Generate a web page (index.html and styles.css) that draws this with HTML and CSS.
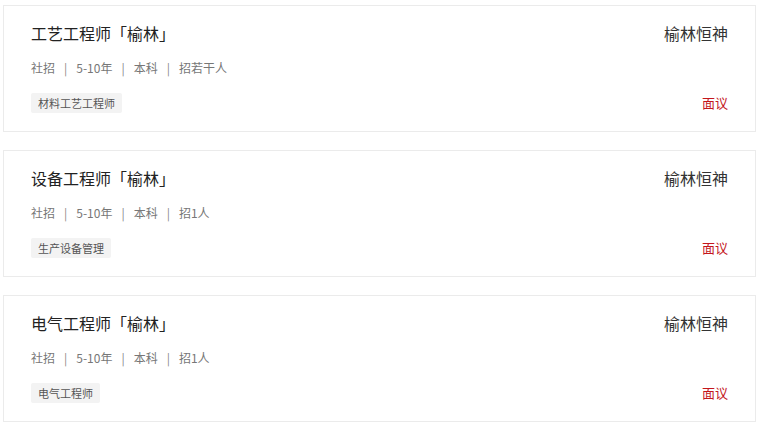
FILE: index.html
```html
<!DOCTYPE html>
<html lang="zh-CN">
	<head>
		<meta charset="UTF-8" />
		<meta name="viewport" content="width=device-width, initial-scale=1.0" />
		<title>职位列表</title>
		<link rel="stylesheet" href="styles.css">
	</head>
	<body>
		<div class="job-list">
			<div class="job-card">
				<div class="job-main">
					<div class="job-title">工艺工程师「榆林」</div>
					<div class="job-meta">社招<span class="sep">|</span>5-10年<span class="sep">|</span>本科<span class="sep">|</span>招若干人</div>
					<div class="job-tags"><span class="tag">材料工艺工程师</span></div>
				</div>
				<div class="job-side">
					<div class="company">榆林恒神</div>
					<div class="salary">面议</div>
				</div>
			</div>

			<div class="job-card">
				<div class="job-main">
					<div class="job-title">设备工程师「榆林」</div>
					<div class="job-meta">社招<span class="sep">|</span>5-10年<span class="sep">|</span>本科<span class="sep">|</span>招1人</div>
					<div class="job-tags"><span class="tag">生产设备管理</span></div>
				</div>
				<div class="job-side">
					<div class="company">榆林恒神</div>
					<div class="salary">面议</div>
				</div>
			</div>

			<div class="job-card">
				<div class="job-main">
					<div class="job-title">电气工程师「榆林」</div>
					<div class="job-meta">社招<span class="sep">|</span>5-10年<span class="sep">|</span>本科<span class="sep">|</span>招1人</div>
					<div class="job-tags"><span class="tag">电气工程师</span></div>
				</div>
				<div class="job-side">
					<div class="company">榆林恒神</div>
					<div class="salary">面议</div>
				</div>
			</div>
		</div>
	</body>
</html>
```

FILE: styles.css
```css
body {
	font-family: "Noto Sans CJK SC", "Noto Sans", sans-serif;
	background-color: #fff;
	margin: 5px 4px 0 3px;
	padding: 0;
}

.job-list {
	display: flex;
	flex-direction: column;
	gap: 18px;
}

.job-card {
	display: flex;
	justify-content: space-between;
	border: 1px solid #ebebeb;
	padding: 15px 27px 18px 27px;
	background-color: #fff;
}

.job-title {
	font-size: 16px;
	line-height: 24px;
	color: #222;
}

.job-meta {
	margin-top: 13px;
	font-size: 12px;
	line-height: 20px;
	color: #777;
}

.sep {
	margin: 0 9px;
	color: #888;
}

.job-tags {
	margin-top: 15px;
	display: flex;
	gap: 8px;
}

.tag {
	display: inline-block;
	height: 20px;
	line-height: 20px;
	padding: 0 7px;
	font-size: 11px;
	color: #555;
	background-color: #f3f3f3;
	border-radius: 2px;
}

.job-side {
	display: flex;
	flex-direction: column;
	justify-content: space-between;
	align-items: flex-end;
}

.company {
	font-size: 16px;
	line-height: 24px;
	color: #333;
}

.salary {
	font-size: 13px;
	line-height: 20px;
	color: #c4161c;
}
```
